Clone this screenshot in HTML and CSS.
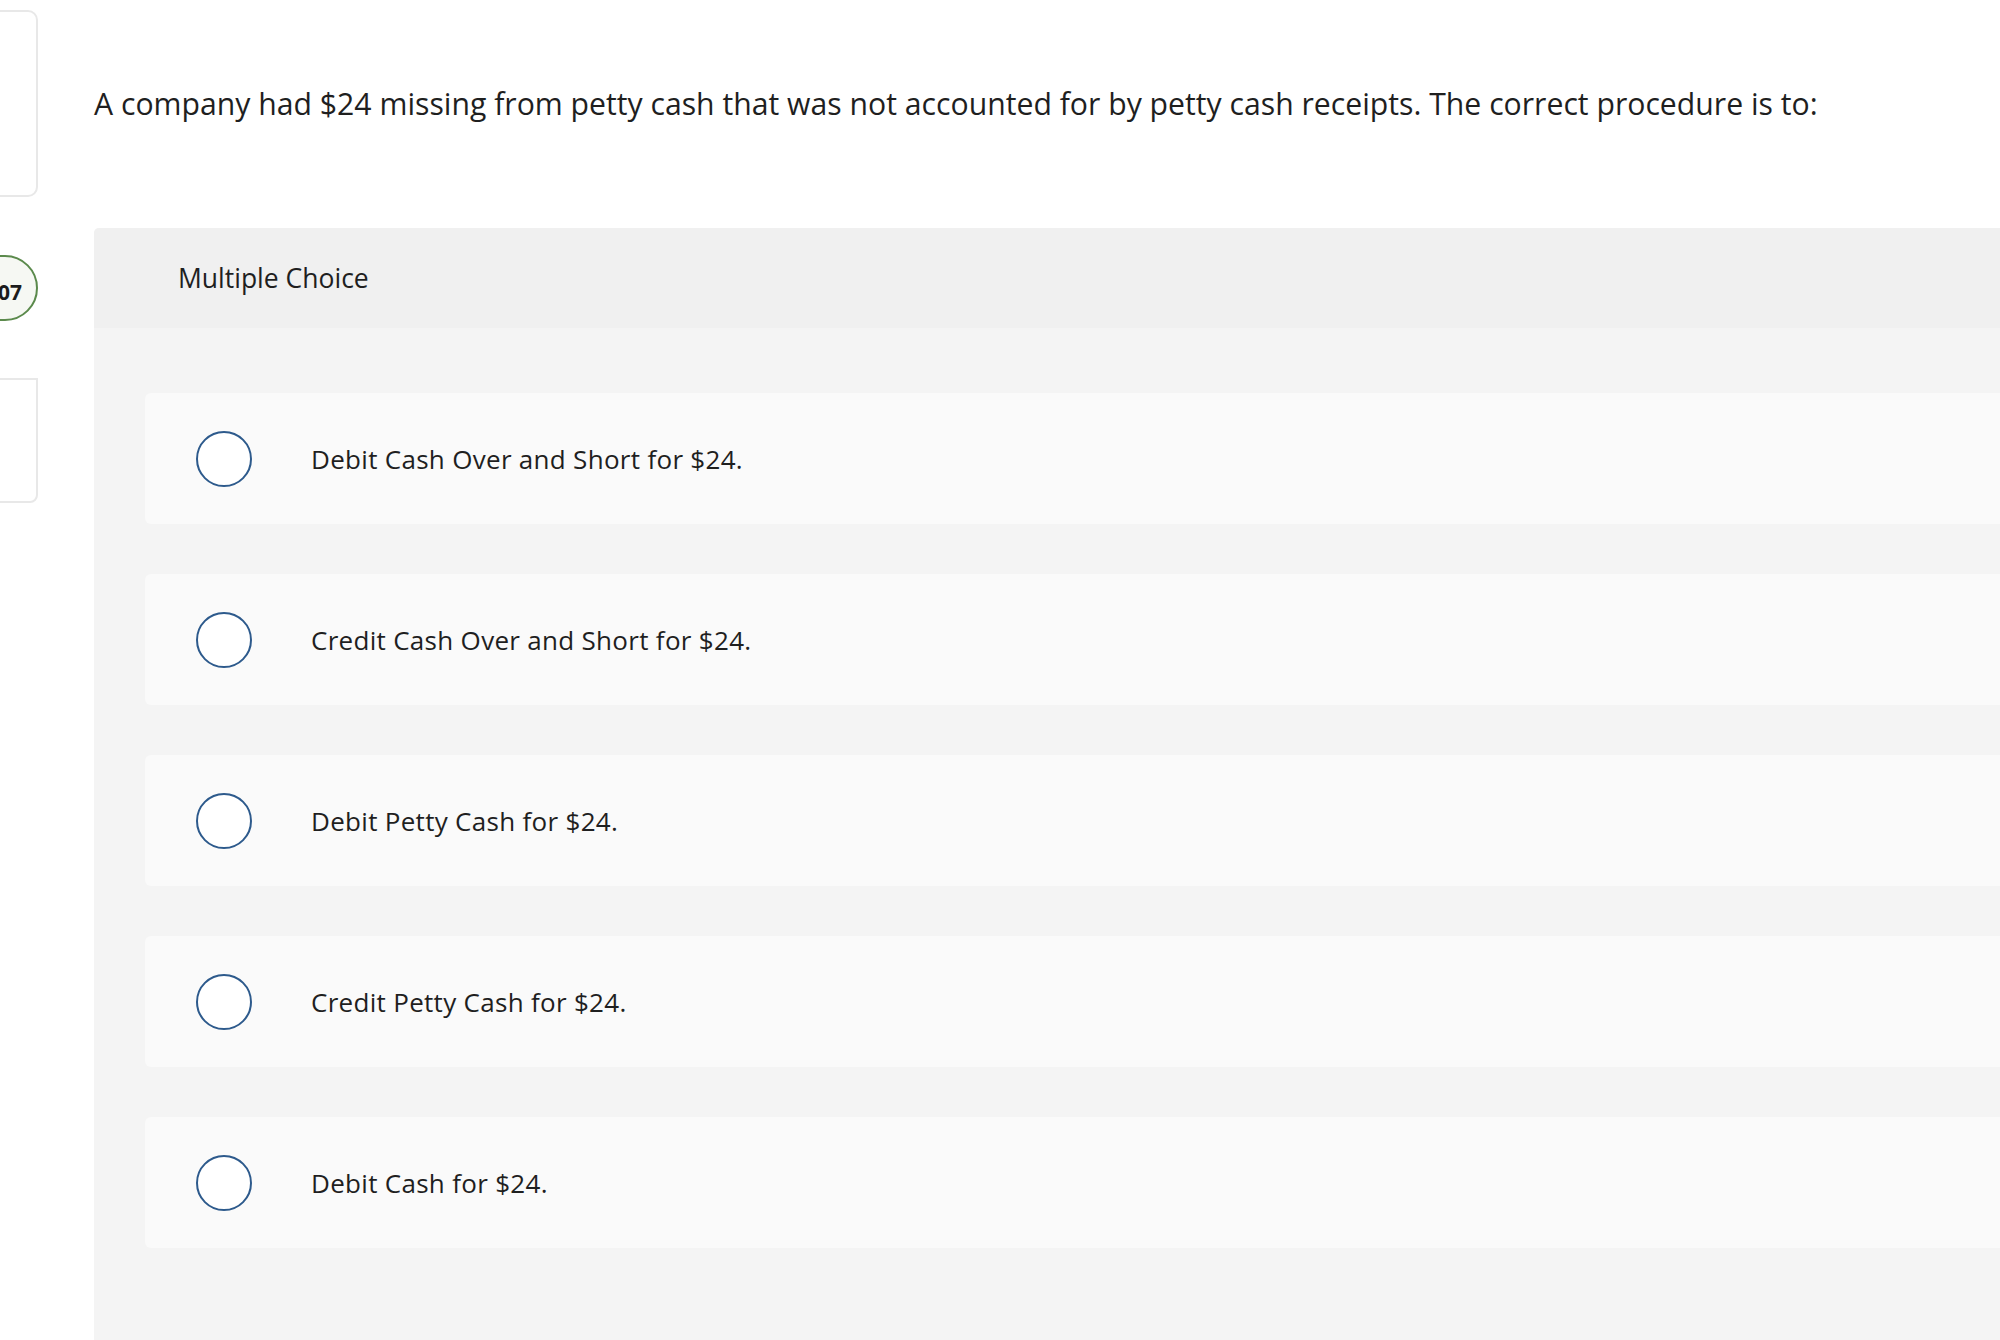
FILE: index.html
```html
<!DOCTYPE html>
<html>
<head>
<meta charset="utf-8">
<link rel="stylesheet" href="styles.css">
</head>
<body>
<div class="page">
  <aside class="sidebar">
    <div class="side-card side-card-top"></div>
    <div class="side-pill">07</div>
    <div class="side-card side-card-bottom"></div>
  </aside>
  <main class="main">
    <p class="question">A company had $24 missing from petty cash that was not accounted for by petty cash receipts. The correct procedure is to:</p>
    <section class="panel">
      <div class="panel-header">Multiple Choice</div>
      <div class="panel-body">
        <label class="option"><span class="radio"></span><span class="option-text">Debit Cash Over and Short for $24.</span></label>
        <label class="option"><span class="radio"></span><span class="option-text">Credit Cash Over and Short for $24.</span></label>
        <label class="option"><span class="radio"></span><span class="option-text">Debit Petty Cash for $24.</span></label>
        <label class="option"><span class="radio"></span><span class="option-text">Credit Petty Cash for $24.</span></label>
        <label class="option"><span class="radio"></span><span class="option-text">Debit Cash for $24.</span></label>
      </div>
    </section>
  </main>
</div>
</body>
</html>
```

FILE: styles.css
```css
html, body {
  margin: 0;
  padding: 0;
  background: #ffffff;
  overflow: hidden;
}

body {
  font-family: "Open Sans", "Noto Sans", sans-serif;
  color: #1f1f1f;
  width: 2000px;
  height: 1340px;
}

.page {
  display: flex;
  align-items: flex-start;
  height: 1340px;
}

.sidebar {
  flex: 0 0 100px;
  margin-left: -62px;
  display: flex;
  flex-direction: column;
  padding-top: 10px;
}

.side-card {
  box-sizing: border-box;
  border: 2px solid #e8e8e8;
  background: #ffffff;
}

.side-card-top {
  height: 187px;
  border-radius: 10px;
}

.side-pill {
  box-sizing: border-box;
  margin-top: 58px;
  height: 66px;
  border: 2px solid #5b8a4c;
  border-radius: 33px;
  background: #f6f8f3;
  font-weight: 700;
  font-size: 21px;
  color: #1c1c1c;
  display: flex;
  align-items: center;
  justify-content: flex-end;
  padding-right: 14px;
  padding-top: 8px;
}

.side-card-bottom {
  margin-top: 57px;
  height: 125px;
  border-radius: 0 0 8px 8px;
}

.main {
  flex: 1 1 auto;
  margin-left: 56px;
  min-width: 0;
}

.question {
  margin: 0;
  padding-top: 84px;
  font-size: 30.2px;
  line-height: 40px;
  white-space: nowrap;
  color: #1f1f1f;
}

.panel {
  margin-top: 104px;
  background: #f4f4f4;
  border-radius: 5px 0 0 0;
  min-height: 1200px;
}

.panel-header {
  box-sizing: border-box;
  height: 100px;
  background: #f0f0f0;
  border-radius: 5px 0 0 0;
  display: flex;
  align-items: center;
  padding-left: 84px;
  font-size: 26.5px;
  color: #1f1f1f;
}

.panel-body {
  padding: 65px 0 0 51px;
  display: flex;
  flex-direction: column;
  gap: 50px;
}

.option {
  box-sizing: border-box;
  height: 131px;
  background: #fafafa;
  border-radius: 6px 0 0 6px;
  display: flex;
  align-items: center;
  padding-left: 51px;
  cursor: pointer;
}

.radio {
  box-sizing: border-box;
  flex: 0 0 56px;
  width: 56px;
  height: 56px;
  border: 2.5px solid #2d5a8c;
  border-radius: 50%;
  background: #ffffff;
}

.option-text {
  margin-left: 59px;
  font-size: 26px;
  letter-spacing: 0.3px;
  color: #1f1f1f;
}
```
